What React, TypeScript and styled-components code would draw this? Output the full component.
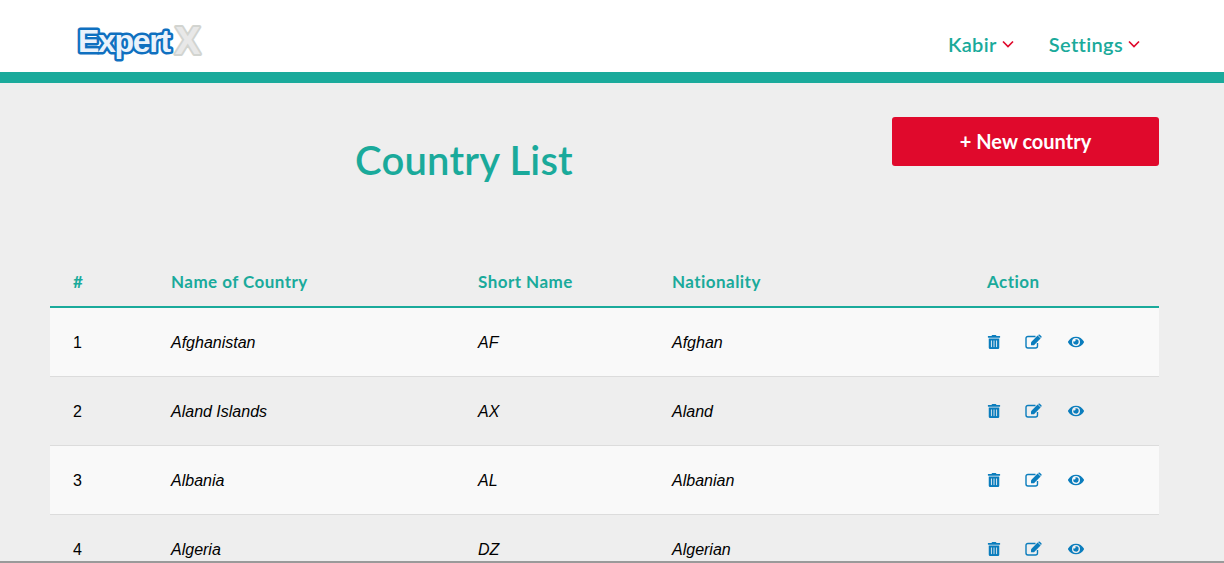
import * as React from 'react';
import styled, { createGlobalStyle } from 'styled-components';
import { FaTrashAlt, FaEye } from 'react-icons/fa';

const Global = createGlobalStyle`
  html, body {
    margin: 0;
    padding: 0;
    height: 563px;
    overflow: hidden;
    background: #eeeeee;
  }
  * { box-sizing: border-box; }
`

const Page = styled.div`
  height: 563px;
  overflow: hidden;
  border-bottom: 2px solid #9a9a9a;
  background: #eeeeee;
  font-family: Lato, "Liberation Sans", sans-serif;
`

// Top bar
const Header = styled.header`
  height: 83px;
  background: #fff;
  border-bottom: 11px solid #1aaa9b;
  display: flex;
  justify-content: space-between;
  align-items: flex-start;
  padding: 0 84px 0 75px;
`

const LogoMark = styled.svg`
  display: block;
  margin-top: 20px;
  font-family: "Liberation Sans", sans-serif;
  font-weight: 700;
  paint-order: stroke fill;
  stroke-linejoin: round;
`

const Logo = () => (
  <LogoMark width="136" height="44" viewBox="0 0 136 44">
    <text x="100" y="34" fontSize="38" fill="#e8e8e8" stroke="#d2d4d0" strokeWidth="4">X</text>
    <text x="3" y="32" fontSize="32" letterSpacing="-1.3" fill="#eaf2fb" stroke="#0f70c0" strokeWidth="5">Expert</text>
  </LogoMark>
)

const Nav = styled.nav`
  display: flex;
  gap: 35px;
  margin-top: 31px;
`

const NavItem = styled.a`
  display: flex;
  align-items: center;
  gap: 5px;
  height: 26px;
  font-size: 20px;
  font-weight: 600;
  letter-spacing: 0.35px;
  color: #1aaa9b;
`

const Chevron = () => (
  <svg width="12" height="9" viewBox="0 0 12 9" fill="none" stroke="#e0092c" strokeWidth="1.7">
    <path d="M1 1.5 L6 6.5 L11 1.5" />
  </svg>
)

const Main = styled.main`
  padding: 34px 65px 0 50px;
`

const TitleRow = styled.div`
  display: flex;
  align-items: flex-start;
  height: 146px;
`

const Title = styled.h1`
  flex: 0 0 828px;
  margin: 17px 0 0;
  text-align: center;
  font-size: 40px;
  line-height: 52px;
  font-weight: 600;
  letter-spacing: 0.2px;
  color: #1aaa9b;
`

const NewButton = styled.button`
  margin-left: 14px;
  width: 267px;
  height: 49px;
  padding-bottom: 2px;
  border: 0;
  border-radius: 3px;
  background: #e0092c;
  color: #fff;
  font-family: inherit;
  font-size: 20px;
  font-weight: 700;
`

// Table
const columns = '121px 307px 194px 315px 1fr'

const HeadRow = styled.div`
  display: grid;
  grid-template-columns: ${columns};
  height: 45px;
  padding-top: 7px;
  border-bottom: 2px solid #1aaa9b;
  font-size: 17px;
  line-height: 24px;
  font-weight: 700;
  letter-spacing: 0.45px;
  color: #1aaa9b;

  span:first-child { padding-left: 23px; }
`

const Row = styled.div<{ $striped: boolean }>`
  display: grid;
  grid-template-columns: ${columns};
  align-items: center;
  height: 69px;
  padding-top: 1.4px;
  border-bottom: 1px solid #dcdcdc;
  background: ${p => (p.$striped ? '#f9f9f9' : 'transparent')};
  font-family: "Liberation Sans", sans-serif;
  font-size: 16px;
  color: #000;
`

const Num = styled.span`
  padding-left: 23px;
`

const Cell = styled.span`
  font-style: italic;
`

const Actions = styled.div`
  display: flex;
  align-items: center;
  margin-top: -2px;
  color: #0b7dbd;
`

const IconSlot = styled.span<{ $w: number }>`
  display: flex;
  width: ${p => p.$w}px;
  font-size: 14px;
`

// pencil-in-square, the package only has the thin outlined one
const EditIcon = () => (
  <svg width="17" height="15" viewBox="0 0 17 15" fill="currentColor">
    <path d="M10.5 2.5 H3 Q1 2.5 1 4.5 V12 Q1 14 3 14 H10.5 Q12.5 14 12.5 12 V9" fill="none" stroke="currentColor" strokeWidth="1.4" />
    <path d="M12.6 1.6 L15.6 4.6 L9 11.2 H6 V8.2 Z" />
    <path d="M13.6 .7 Q14.2 .2 14.8 .7 L16.4 2.3 Q16.9 2.9 16.4 3.5 L16 3.9 L13 .9 Z" />
  </svg>
)

const countries = [
  ['Afghanistan', 'AF', 'Afghan'],
  ['Aland Islands', 'AX', 'Aland'],
  ['Albania', 'AL', 'Albanian'],
  ['Algeria', 'DZ', 'Algerian'],
]

export default function App() {
  return (
    <Page>
      <Global />
      <Header>
        <Logo />
        <Nav>
          <NavItem>Kabir <Chevron /></NavItem>
          <NavItem>Settings <Chevron /></NavItem>
        </Nav>
      </Header>
      <Main>
        <TitleRow>
          <Title>Country List</Title>
          <NewButton>+ New country</NewButton>
        </TitleRow>
        <HeadRow>
          <span>#</span>
          <span>Name of Country</span>
          <span>Short Name</span>
          <span>Nationality</span>
          <span>Action</span>
        </HeadRow>
        {countries.map((c, i) => (
          <Row key={c[0]} $striped={i % 2 === 0}>
            <Num>{i + 1}</Num>
            <Cell>{c[0]}</Cell>
            <Cell>{c[1]}</Cell>
            <Cell>{c[2]}</Cell>
            <Actions>
              <IconSlot $w={38}><FaTrashAlt /></IconSlot>
              <IconSlot $w={43}><EditIcon /></IconSlot>
              <IconSlot $w={20}><FaEye style={{ fontSize: 16 }} /></IconSlot>
            </Actions>
          </Row>
        ))}
      </Main>
    </Page>
  )
}
